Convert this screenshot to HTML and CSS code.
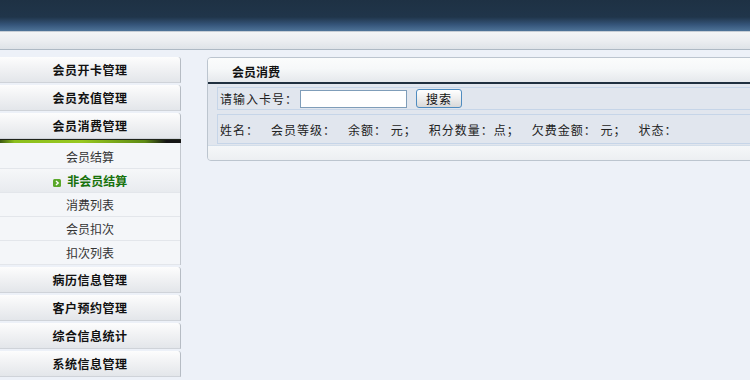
FILE: index.html
```html
<!DOCTYPE html>
<html lang="zh-CN">
<head>
    <meta charset="UTF-8">
    <title>会员消费</title>
    <link rel="stylesheet" href="styles.css">
</head>
<body>
    <div class="top-bar"></div>
    <div class="sub-bar"></div>
    <div class="main">
        <div class="sidebar">
            <div class="menu-item">会员开卡管理</div>
            <div class="menu-item">会员充值管理</div>
            <div class="menu-item open">会员消费管理</div>
            <div class="menu-line"></div>
            <ul class="submenu">
                <li>会员结算</li>
                <li class="active">
                    <svg class="arrow" width="8" height="8" viewBox="0 0 8 8">
                        <rect x="0" y="0" width="8" height="8" rx="1.5" fill="#5aa82a"/>
                        <path d="M3 2 L5.2 4 L3 6" stroke="#fff" stroke-width="1.4" fill="none"/>
                    </svg>
                    非会员结算
                </li>
                <li>消费列表</li>
                <li>会员扣次</li>
                <li>扣次列表</li>
            </ul>
            <div class="menu-item">病历信息管理</div>
            <div class="menu-item">客户预约管理</div>
            <div class="menu-item">综合信息统计</div>
            <div class="menu-item">系统信息管理</div>
        </div>

        <div class="panel">
            <div class="panel-title">会员消费</div>
            <div class="panel-body">
                <div class="row search-row">
                    <label for="card">请输入卡号：</label>
                    <input type="text" id="card" class="card-input">
                    <button class="search-button">搜索</button>
                </div>
                <div class="row info-row">
                    <span>姓名：</span>
                    <span>会员等级：</span>
                    <span>余额： 元；</span>
                    <span>积分数量：点；</span>
                    <span>欠费金额： 元；</span>
                    <span>状态：</span>
                </div>
            </div>
            <div class="panel-foot"></div>
        </div>
    </div>
</body>
</html>
```

FILE: styles.css
```css
html, body {
    overflow: hidden;
}
body {
    margin: 0;
    padding: 0;
    font-family: "Noto Sans CJK SC", "DejaVu Sans", sans-serif;
    font-size: 12px;
    color: #222;
    background-color: #edf1f8;
    height: 380px;
}
.top-bar {
    height: 31px;
    background: linear-gradient(#1e3144 0%, #20354a 55%, #35557a 80%, #4f7498 100%);
}
.sub-bar {
    height: 17px;
    background: linear-gradient(#f4f5f6, #eceef1 50%, #dfe3e8);
    border-top: 1px solid #c7ced6;
    border-bottom: 1px solid #aeb9c4;
}
.main {
    display: flex;
    align-items: flex-start;
    padding-top: 7px;
}
.sidebar {
    width: 181px;
    flex-shrink: 0;
}
.menu-item {
    height: 26px;
    line-height: 26px;
    margin-bottom: 2px;
    text-align: center;
    font-weight: bold;
    letter-spacing: 0.5px;
    color: #111;
    background: linear-gradient(#fdfdfd, #f1f2f4 45%, #e3e6ea);
    border-right: 1px solid #b6bcc4;
    border-bottom: 1px solid #cfd3d9;
    border-top-right-radius: 3px;
    box-sizing: border-box;
}
.menu-item.open {
    margin-bottom: 0;
}
.menu-line {
    height: 4px;
    border-top: 1px solid #20241c;
    background: linear-gradient(to right, #3d5a12, #8cbf1e 8%, #98c820 45%, #5d8a14 80%, #151515 92%);
    box-sizing: border-box;
}
.submenu {
    list-style: none;
    margin: 0 0 2px 0;
    padding: 2px 0 0 0;
    background-color: #f4f6f9;
    border-right: 1px solid #c3c8cf;
}
.submenu li {
    height: 23px;
    line-height: 23px;
    text-align: center;
    color: #333;
    border-bottom: 1px solid #e3e6eb;
}
.submenu li.active {
    color: #17720c;
    font-weight: bold;
    background: linear-gradient(#f6f7f9, #e8ebef);
}
.arrow {
    vertical-align: -1px;
    margin-right: 4px;
}
.panel {
    width: 560px;
    flex-shrink: 0;
    margin-left: 26px;
    border: 1px solid #bcc5cf;
    border-radius: 4px;
    background-color: #e1e6ee;
    overflow: hidden;
}
.panel-title {
    height: 24px;
    line-height: 28px;
    padding-left: 24px;
    font-weight: bold;
    color: #111;
    background: linear-gradient(#fbfcfc, #f6f8f9 45%, #e5e8ec);
    border-bottom: 2px solid #1f2f3f;
}
.panel-body {
    padding: 3px 0 0 9px;
}
.row {
    display: flex;
    align-items: center;
    border: 1px solid #c6d5e8;
    border-right: none;
    background-color: #e1e6ee;
    padding-left: 2px;
    letter-spacing: 1px;
}
.search-row {
    height: 21px;
}
.info-row {
    height: 28px;
    margin-top: 4px;
    gap: 12px;
}
.card-input {
    width: 101px;
    height: 16px;
    margin: 0 0 0 2px;
    padding: 0 2px;
    border: 1px solid #7f9db9;
    background-color: #fff;
}
.search-button {
    width: 46px;
    height: 19px;
    margin-left: 9px;
    padding: 0;
    font-family: inherit;
    font-size: 12px;
    letter-spacing: 1px;
    color: #111;
    border: 1px solid #4f8cc0;
    border-radius: 3px;
    background: linear-gradient(#ffffff, #eeeeee 50%, #d8d8d8);
}
.panel-foot {
    height: 14px;
    margin-top: 1px;
    background: linear-gradient(#f5f7f9, #eceff2);
    border-top: 1px solid #d3deea;
}
```
